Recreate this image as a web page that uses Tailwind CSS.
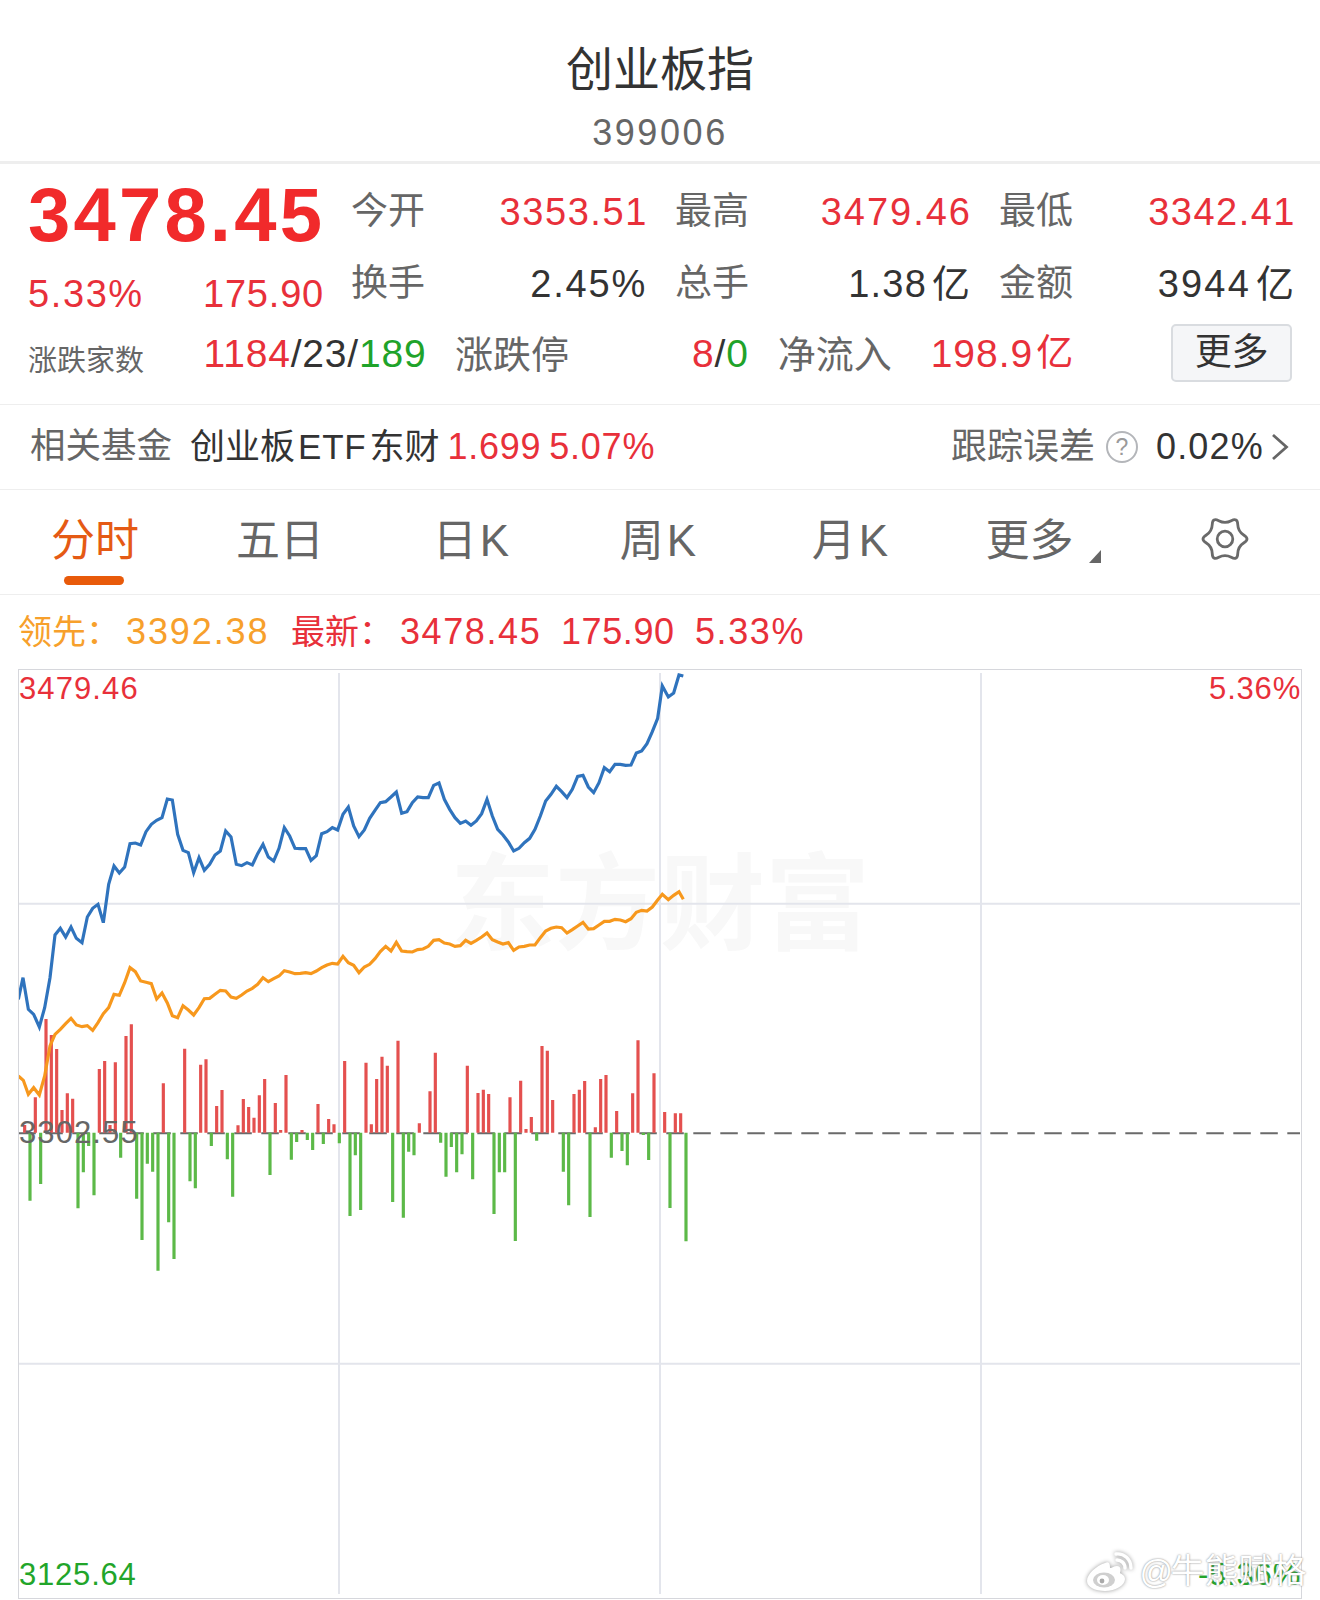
<!DOCTYPE html>
<html lang="zh">
<head>
<meta charset="utf-8">
<script src="https://cdn.jsdelivr.net/npm/@tailwindcss/browser@4"></script>
</head>
<body class="bg-white">
<div class="relative w-[1320px] h-[1600px] overflow-hidden bg-white text-[#333] font-['Liberation_Sans','Noto_Sans_CJK_SC',sans-serif]">

  <header class="h-[164px] flex flex-col items-center border-b-[3px] border-[#eeeeee]">
    <h1 class="mt-[41px] h-[58px] leading-[58px] text-[47px] font-normal text-[#333]">创业板指</h1>
    <p class="mt-[14px] h-[40px] leading-[40px] text-[36px] tracking-[2.6px] text-[#666]">399006</p>
  </header>

  <section class="h-[241px] border-b border-[#eeeeee] px-[28px]">
    <div class="flex h-[153px]">
      <div class="w-[296px]">
        <div class="h-[88px] mt-[7px] leading-[88px] text-[76px] font-bold tracking-[3.2px] text-[#f12a2b]">3478.45</div>
        <div class="flex justify-between mt-[12px] h-[46px] leading-[46px] text-[38px] tracking-[0.8px] text-[#e8303a]"><span class="tracking-[1.6px]">5.33%</span><span>175.90</span></div>
      </div>
      <div class="ml-[27px] flex-1 grid grid-cols-3 gap-x-[31px] content-start pt-[12px] text-[38px]">
        <div class="h-[72px] flex justify-between items-center"><span class="text-[#666] text-[37px]">今开</span><span class="text-[#e8303a] tracking-[1.6px] -mr-[4px]">3353.51</span></div>
        <div class="h-[72px] flex justify-between items-center"><span class="text-[#666] text-[37px]">最高</span><span class="text-[#e8303a] tracking-[2px] -mr-[4px]">3479.46</span></div>
        <div class="h-[72px] flex justify-between items-center"><span class="text-[#666] text-[37px]">最低</span><span class="text-[#e8303a] tracking-[1.5px] -mr-[4px]">3342.41</span></div>
        <div class="h-[72px] flex justify-between items-center"><span class="text-[#666] text-[37px]">换手</span><span class="text-[#333] tracking-[1.8px] -mr-[3px]">2.45%</span></div>
        <div class="h-[72px] flex justify-between items-center"><span class="text-[#666] text-[37px]">总手</span><span class="text-[#333] -mr-[2px] flex items-center"><span class="tracking-[1.2px]">1.38</span><span class="ml-[5px]">亿</span></span></div>
        <div class="h-[72px] flex justify-between items-center"><span class="text-[#666] text-[37px]">金额</span><span class="text-[#333] -mr-[2px] flex items-center"><span class="tracking-[2.2px]">3944</span><span class="ml-[5px]">亿</span></span></div>
      </div>
    </div>
    <div class="flex items-center h-[72px] pt-[2px] text-[39px] whitespace-nowrap">
      <span class="w-[176px] text-[29px] text-[#666] pt-[16px]">涨跌家数</span>
      <span class="w-[252px] tracking-[0.8px]"><span class="text-[#e8303a]">1184</span>/23/<span class="text-[#1fa32a]">189</span></span>
      <span class="w-[112px] text-[38px] pt-[3px] text-[#666]">涨跌停</span>
      <span class="w-[182px] text-right tracking-[0.8px] pr-[0px]"><span class="text-[#e8303a]">8</span>/<span class="text-[#1fa32a]">0</span></span>
      <span class="ml-[29px] w-[112px] text-[38px] pt-[3px] text-[#666]">净流入</span>
      <span class="w-[184px] flex justify-end items-center text-[#e8303a]"><span class="tracking-[1px]">198.9</span><span class="ml-[3px] text-[37px]">亿</span></span>
      <button class="ml-[98px] w-[121px] h-[58px] -mt-[3px] rounded-[5px] border-2 border-[#d9dce0] bg-[#f5f6f8] text-[#333] text-[37px] leading-none">更多</button>
    </div>
  </section>

  <section class="h-[85px] border-b border-[#eeeeee] pl-[30px] pr-[31px] flex items-center text-[35.5px] whitespace-nowrap">
    <span class="text-[#666]">相关基金</span>
    <span class="ml-[18px] text-[#333] text-[35px] flex items-center">创业板<span class="ml-[3px] tracking-[0.8px]">ETF</span><span class="ml-[3px]">东财</span></span>
    <span class="ml-[8px] text-[36px] text-[#e8303a] tracking-[0.7px]">1.699</span>
    <span class="ml-[8px] text-[36px] text-[#e8303a] tracking-[0.8px]">5.07%</span>
    <span class="ml-auto text-[36px] text-[#666]">跟踪误差</span>
    <svg class="ml-[11px]" width="32" height="32" viewBox="0 0 32 32"><circle cx="16" cy="16" r="15" fill="none" stroke="#b4b6ba" stroke-width="2"/><text x="16" y="24" text-anchor="middle" font-size="23" fill="#9a9a9a">?</text></svg>
    <span class="ml-[18px] text-[36px] text-[#333] tracking-[1.2px]">0.02%</span>
    <svg class="ml-[7px]" width="18" height="28" viewBox="0 0 18 28"><path d="M2 2 15.5 14 2 26" fill="none" stroke="#666" stroke-width="2.8"/></svg>
  </section>

  <nav class="relative h-[104px] flex items-start text-[44px] text-[#666]">
    <a class="relative w-[190px] h-full pt-[21px] text-center text-[#e55a14] leading-[60px]">分时<span class="absolute left-[64px] top-[86px] w-[60px] h-[9px] rounded-full bg-[#e85a0a]"></span></a>
    <a class="w-[180px] pt-[21px] text-center leading-[60px]">五日</a>
    <a class="w-[202px] pt-[21px] text-center leading-[60px]">日<span class="ml-[3px]">K</span></a>
    <a class="w-[172px] pt-[21px] text-center leading-[60px]">周<span class="ml-[3px]">K</span></a>
    <a class="w-[212px] pt-[21px] text-center leading-[60px]">月<span class="ml-[3px]">K</span></a>
    <a class="w-[174px] pt-[21px] leading-[60px] flex justify-center items-start">更多<svg class="ml-[15px] mt-[39px]" width="12" height="13" viewBox="0 0 12 13"><path d="M12 0V13H0Z" fill="#666"/></svg></a>
    <span class="w-[190px] pt-[26px] flex justify-center">
      <svg width="50" height="46" viewBox="-1 -1 50 46"><path d="M43 25.75Q49 22 43 18.25Q37 14.5 36.75 7.43Q36.5 .35 30.25 3.68Q24 7 17.75 3.68Q11.5 .35 11.25 7.43Q11 14.5 5 18.25Q-1 22 5 25.75Q11 29.5 11.25 36.58Q11.5 43.65 17.75 40.33Q24 37 30.25 40.33Q36.5 43.65 36.75 36.58Q37 29.5 43 25.75Z" fill="none" stroke="#6a6a6a" stroke-width="2.8"/><circle cx="24" cy="22" r="7.8" fill="none" stroke="#6a6a6a" stroke-width="2.8"/></svg>
    </span>
  </nav>

  <section class="h-[75px] border-t border-[#eeeeee] flex items-center pl-[18px] text-[36px] tracking-[1.6px] text-[#e8303a] whitespace-nowrap">
    <span class="text-[#f7a02c] text-[34px] tracking-normal w-[108px]">领先：</span>
    <span class="text-[#f7a02c] tracking-[1.9px] w-[165px]">3392.38</span>
    <span class="text-[34px] tracking-normal w-[109px]">最新：</span>
    <span class="w-[161px]">3478.45</span>
    <span class="w-[134px] tracking-[0.6px]">175.90</span>
    <span>5.33%</span>
  </section>

  <section class="relative ml-[18px] w-[1284px] h-[930px] border border-[#d6d7dc] text-[31px] tracking-[1.1px]">
    <div class="absolute left-[431px] top-[182px] whitespace-nowrap text-[105px] font-bold leading-none tracking-normal text-[#f8f8f8]">东方财富</div>
    <svg class="absolute inset-0" width="1282" height="928" viewBox="19 669 1282 928">
      <g fill="none" stroke="#e3e5ec" stroke-width="2">
        <path d="M339 672V1593M660 672V1593M981 672V1593"/>
        <path d="M19 902.7H1300M19 1362.7H1300"/>
      </g>
      <path d="M18.3 1132.2H1300" fill="none" stroke="#6a6a6a" stroke-width="2" stroke-dasharray="17.5 9.5"/>
      <g transform="translate(0 1009) scale(.33333)" fill="none" stroke-width="9.5">
        <path stroke="#e4504f" d="M74 368V345M106 368V262M138 368V27M154 368V75M170 368V117M186 368V300M202 368V250M218 368V266M298 368V177M314 368V153M330 368V345M346 368V157M378 368V78M394 368V43M490 368V220M554 368V116M602 368V164M618 368V148M650 368V288M666 368V240M714 368V346M730 368V267M746 368V291M762 368V323M778 368V256M794 368V207M826 368V279M842 368V360M858 368V195M906 368V360M954 368V282M986 368V327M1002 368V343M1034 368V153"/>
        <path stroke="#5cb948" d="M90 368V572M122 368V522M234 368V595M250 368V487M266 368V408M282 368V556M362 368V443M410 368V566M426 368V690M442 368V461M458 368V485M474 368V782M506 368V637M522 368V747M570 368V514M586 368V535M634 368V408M682 368V448M698 368V560M810 368V495M874 368V449M890 368V396M922 368V390M938 368V420M970 368V402M1018 368V400"/>
      </g>
      <g transform="translate(340 1009) scale(.33333)" fill="none" stroke-width="9.5">
        <path stroke="#e4504f" d="M78 368V158M94 368V343M110 368V207M126 368V140M142 368V167M174 368V92M238 368V340M270 368V244M286 368V128M382 368V167M414 368V249M430 368V239M446 368V252M510 368V262M542 368V212M558 368V357M574 368V321M606 368V108M622 368V122M638 368V270M702 368V252M718 368V239M734 368V213M766 368V352M782 368V207M798 368V195M830 368V303M878 368V250M894 368V91M942 368V190M974 368V306M1006 368V310M1022 368V310"/>
        <path stroke="#5cb948" d="M30 368V618M46 368V436M62 368V600M158 368V576M190 368V623M206 368V425M222 368V436M302 368V398M318 368V500M334 368V411M350 368V487M366 368V433M398 368V508M462 368V612M478 368V487M494 368V487M526 368V693M590 368V392M670 368V485M686 368V586M750 368V621M814 368V443M846 368V423M862 368V466M910 368V375M926 368V450M990 368V594M1038 368V694"/>
      </g>
      <g transform="translate(0 660) scale(.33333)" fill="none" stroke-width="9.5" stroke-linejoin="miter">
        <polyline stroke="#2f73bd" points="55,1015 69,950 85,1045 101,1060 118,1098 134,1040 150,950 165,822 181,802 197,828 213,798 229,832 246,845 262,768 278,742 294,730 310,785 326,670 342,615 358,636 374,618 390,548 406,546 422,552 438,512 454,490 470,478 486,470 502,414 517,417 533,520 549,568 565,575 581,635 597,590 613,628 629,610 645,582 661,570 677,510 693,528 709,610 725,614 741,605 757,612 773,578 789,550 805,588 821,600 837,562 853,500 869,525 885,562 901,563 917,563 933,598 949,584 965,518 981,512 997,500 1013,507 1029,460 1045,438 1061,495 1077,527 1093,507 1109,472 1125,448 1141,425 1157,422 1173,408 1189,393 1205,457 1221,452 1237,425 1253,408 1269,410 1285,410 1301,373 1317,366 1333,415 1349,445 1365,470 1381,487 1397,480 1413,493 1429,480 1445,458 1461,415 1477,465 1493,505 1509,522 1525,543 1541,570 1557,562 1573,545 1589,532 1605,505 1621,465 1637,420 1653,400 1669,376 1685,392 1701,410 1717,385 1733,346 1749,343 1765,378 1781,395 1797,365 1813,320 1829,332 1845,310 1861,310 1877,313 1893,312 1909,276 1925,270 1941,248 1957,212 1973,172 1987,75 2005,108 2021,96 2037,42 2050,45"/>
        <polyline stroke="#f7981d" points="55,1245 70,1258 85,1300 101,1280 118,1302 134,1245 150,1155 165,1120 181,1105 197,1088 213,1072 229,1092 246,1097 262,1094 278,1108 294,1085 310,1058 326,1040 342,1000 358,1003 374,965 390,920 406,932 422,960 438,964 454,968 470,1014 486,996 502,1026 517,1064 533,1070 549,1034 565,1047 581,1062 597,1040 613,1013 629,1012 645,1000 661,988 677,990 693,1008 709,1012 725,1002 741,990 757,982 773,970 789,950 805,962 821,953 837,945 853,929 869,933 885,938 901,937 917,935 933,938 949,930 965,920 981,912 997,907 1013,909 1029,886 1045,905 1061,913 1077,935 1093,918 1109,910 1125,893 1141,872 1157,856 1173,870 1189,844 1205,870 1221,872 1237,873 1253,866 1269,864 1285,856 1301,838 1317,836 1333,846 1349,849 1365,856 1381,854 1397,838 1413,847 1429,838 1445,828 1461,816 1477,836 1493,843 1509,849 1525,845 1541,868 1557,858 1573,856 1589,852 1605,852 1621,830 1637,810 1653,802 1669,798 1685,800 1701,816 1717,806 1733,795 1749,784 1765,804 1781,803 1797,792 1813,781 1829,781 1845,775 1861,777 1877,782 1893,773 1909,754 1925,748 1941,750 1957,738 1973,717 1987,700 2005,716 2021,703 2037,692 2050,715"/>
      </g>
    </svg>
    <span class="absolute left-0 top-[2px] leading-[34px] text-[#e8303a]">3479.46</span>
    <span class="absolute right-0 top-[2px] leading-[34px] tracking-[0.8px] text-[#e8303a]">5.36%</span>
    <span class="absolute left-0 top-[446px] leading-[34px] text-[#666]">3302.55</span>
    <span class="absolute left-0 top-[888px] leading-[34px] tracking-[0.8px] text-[#22a52a]">3125.64</span>
    <span class="absolute right-0 top-[888px] leading-[34px] tracking-[0.8px] text-[#22a52a]">-5.36%</span>
  </section>

  <div class="absolute left-[1086px] top-[1546px] flex items-center text-[34px] text-white [text-shadow:0_0_2px_#777]">
    <svg width="48" height="40" viewBox="0 0 48 40" class="drop-shadow-[0_0_2px_#999]"><path d="M19 11C10 14 1 22 1 29c0 6 8 10 18 10 11 0 20-6 20-12 0-4-4-5-5-6 1-3 1-7-3-7-3 0-5 2-7 2 0-5-1-7-5-5Z" fill="#fff"/><ellipse cx="18" cy="28" rx="11" ry="7.5" fill="#cfcfcf"/><ellipse cx="17" cy="28" rx="6" ry="5" fill="#fff"/><circle cx="16" cy="29" r="2.4" fill="#aaa"/><path d="M30 2c8-1 15 5 15 14M31 8c4 0 8 3 8 8" fill="none" stroke="#fff" stroke-width="3.4" stroke-linecap="round"/></svg>
    <span class="ml-[5px] italic text-[33px]">@</span><span class="ml-[-2px]">牛熊赋格</span>
  </div>
</div>
</body>
</html>
